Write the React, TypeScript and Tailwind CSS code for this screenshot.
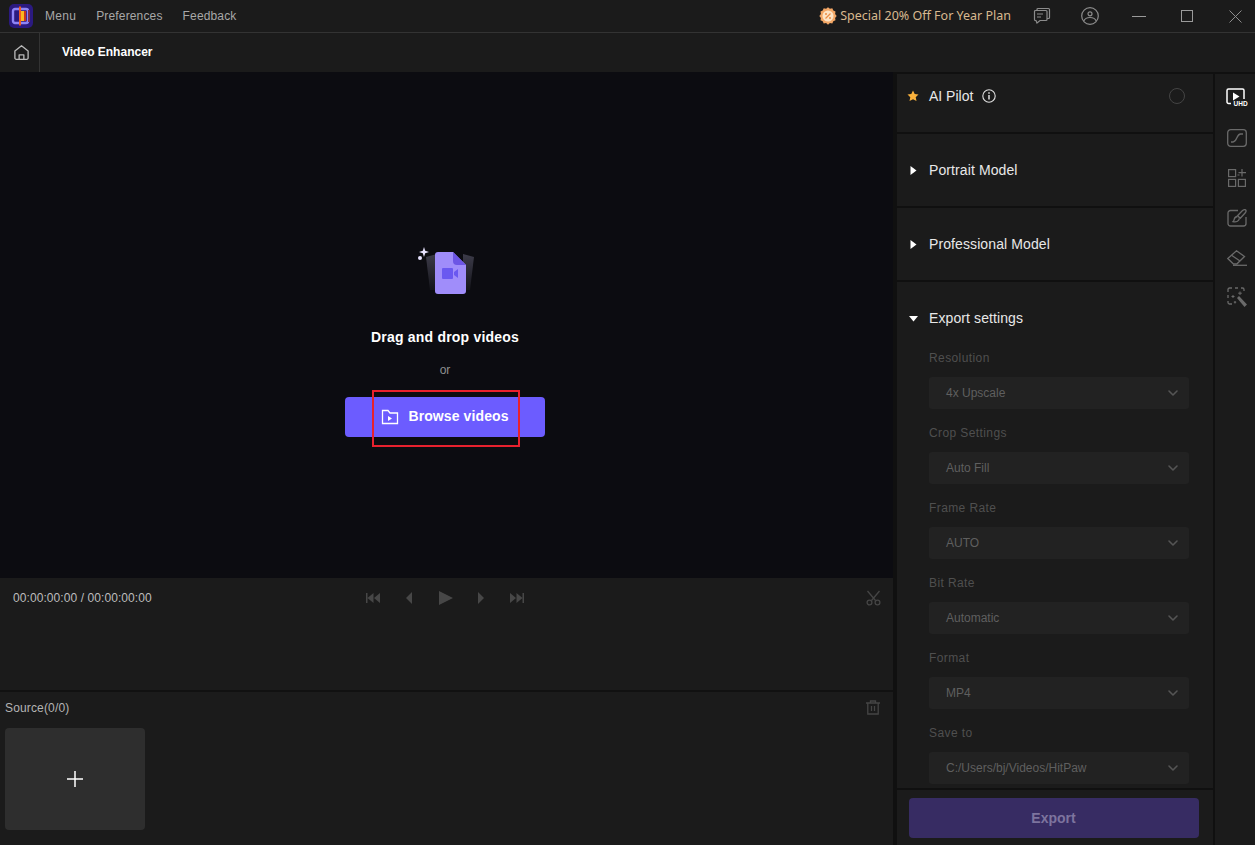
import { ChevronDown } from "lucide-react"

const sans = "font-['Liberation_Sans',Arial,sans-serif]"

const settings = [
  { label: "Resolution", value: "4x Upscale" },
  { label: "Crop Settings", value: "Auto Fill" },
  { label: "Frame Rate", value: "AUTO" },
  { label: "Bit Rate", value: "Automatic" },
  { label: "Format", value: "MP4" },
  { label: "Save to", value: "C:/Users/bj/Videos/HitPaw" },
]

function Logo() {
  return (
    <svg width="24" height="24" viewBox="0 0 24 24">
      <rect width="24" height="24" rx="5" fill="#2b1a80" />
      <rect x="4" y="5" width="15" height="14" rx="2" fill="none" stroke="#8f84f5" strokeWidth="2.400" />
      <rect x="10" y="7" width="7" height="10" fill="#c8341f" />
      <rect x="12" y="7" width="3" height="10" fill="#f9b81f" />
      <rect x="19" y="6" width="2" height="12" fill="#7c2c52" />
      <rect x="10" y="2.500" width="2" height="19" fill="#f15a22" />
    </svg>
  )
}

function HomeIcon() {
  return (
    <svg width="17" height="17" viewBox="0 0 18 18" fill="none" stroke="#b8b8b8" strokeWidth="1.400" strokeLinejoin="round">
      <path d="M2 7.500 9 1.800l7 5.700v7.200a1.500 1.500 0 0 1-1.500 1.500h-11A1.500 1.500 0 0 1 2 14.700z" />
      <path d="M6.500 16v-4.500h5V16" />
    </svg>
  )
}

function PromoBadge() {
  return (
    <svg width="18" height="18" viewBox="0 0 18 18">
      <path
        d="M9 .3l1.900 1.500 2.400-.5 1 2.200 2.200 1-.4 2.400L17.700 9l-1.600 2 .4 2.300-2.200 1-1 2.200-2.400-.5L9 17.700 7.100 16l-2.400.5-1-2.200-2.200-1 .4-2.300L.3 9l1.600-2.100-.4-2.400 2.200-1 1-2.200 2.400.5z"
        fill="#f3a766"
      />
      <circle cx="9" cy="9" r="5.500" fill="#fde3c4" />
      <path d="M6.500 11.500l5-5" stroke="#e98b45" strokeWidth="1.200" />
      <circle cx="7" cy="7" r="1" fill="#e98b45" />
      <circle cx="11" cy="11" r="1" fill="#e98b45" />
    </svg>
  )
}

function TitleBar() {
  return (
    <header className="flex h-[33px] items-center border-b border-[#333333] bg-[#1b1b1b] text-[12px] tracking-[0.15px] text-[#a8a8a8]">
      <div className="ml-[9px] mr-[12px] flex">
        <Logo />
      </div>
      <nav className="flex gap-[20px]">
        <span className="tracking-[0.3px]">Menu</span>
        <span>Preferences</span>
        <span>Feedback</span>
      </nav>
      <div className="ml-auto flex items-center gap-[3px] font-['Noto_Sans',sans-serif] text-[12.500px] tracking-normal text-[#d8b98f]">
        <PromoBadge />
        <span>Special 20% Off For Year Plan</span>
      </div>
      <svg className="ml-[22px]" width="18" height="18" viewBox="0 0 18 18" fill="none" stroke="#8c8c8c" strokeWidth="1.200">
        <path d="M4 3.500V2.500a1 1 0 0 1 1-1h10.500a1 1 0 0 1 1 1v8a1 1 0 0 1-1 1H14" />
        <path d="M2.500 3.500h10.500a1 1 0 0 1 1 1v8a1 1 0 0 1-1 1H7l-3 2.500-1-2.500h-.5a1 1 0 0 1-1-1v-8a1 1 0 0 1 1-1z" />
        <path d="M4 7h6M4 10h4" />
      </svg>
      <svg className="ml-[30px]" width="18" height="18" viewBox="0 0 18 18" fill="none" stroke="#8c8c8c" strokeWidth="1.200">
        <circle cx="9" cy="9" r="8.300" />
        <circle cx="9" cy="6.800" r="2" />
        <path d="M2.800 14c1-2.500 3-3.500 6.200-3.500s5.200 1 6.200 3.500" />
      </svg>
      <div className="ml-[33px] h-px w-[14px] bg-[#9a9a9a]" />
      <div className="ml-[35px] size-[12px] border border-[#9a9a9a]" />
      <svg className="ml-[36px] mr-[13px]" width="13" height="13" viewBox="0 0 13 13" stroke="#8c8c8c" strokeWidth="1">
        <path d="M.5.500l12 12M12.500.500l-12 12" />
      </svg>
    </header>
  )
}

function TabBar() {
  return (
    <div className="flex h-[39px] items-center bg-[#1b1b1b]">
      <div className="flex h-full w-[40px] items-center justify-center border-r border-[#333333] pl-[3px]">
        <HomeIcon />
      </div>
      <span className="mb-[2px] ml-[22px] text-[12px] font-bold text-white">Video Enhancer</span>
    </div>
  )
}

function DropArt() {
  return (
    <svg width="60" height="50" viewBox="0 0 60 50">
      <defs>
        <linearGradient id="card" x1="0" y1="0" x2="0" y2="1">
          <stop offset="0" stopColor="#3c3b49" />
          <stop offset="1" stopColor="#16161c" />
        </linearGradient>
      </defs>
      <path d="M11 10l11-3v36h-7z" fill="url(#card)" />
      <path d="M59 10l-11-3v36h7z" fill="url(#card)" />
      <path d="M23 5h15l13 13v26a3 3 0 0 1-3 3H23a3 3 0 0 1-3-3V8a3 3 0 0 1 3-3z" fill="#a08dfa" />
      <path d="M38 5l13 13h-9a4 4 0 0 1-4-4z" fill="#6c55e5" />
      <rect x="27" y="21" width="11" height="11" rx="1" fill="#6a58f0" />
      <path d="M39 25l4-3v9l-4-3z" fill="#6a58f0" />
      <path d="M9 0l1.200 3.800 3.800 1.200-3.800 1.200L9 10 7.800 6.200 4 5l3.800-1.200z" fill="#e8e3ff" />
      <circle cx="5" cy="11" r="2" fill="#e8e3ff" />
    </svg>
  )
}

function Preview() {
  return (
    <div className="relative flex h-[506px] flex-col items-center bg-[#0c0c11] pr-[3px]">
      <div className="mt-[175px] flex w-[200px] flex-col items-center">
        <DropArt />
        <p className="mt-[30px] text-[14px] font-bold leading-[20px] tracking-[0.2px] text-white">Drag and drop videos</p>
        <p className="mt-[16px] text-[12px] leading-[14px] text-[#8f8f8f]">or</p>
        <button className="mt-[20px] flex h-[40px] w-[200px] items-center justify-center gap-[9px] rounded-[4px] bg-[#6c5cff] pb-px text-[14px] font-bold tracking-[0.1px] text-white">
          <svg width="18" height="18" viewBox="0 0 18 18" fill="none" stroke="#ffffff" strokeWidth="1.300">
            <path d="M1.500 15.500V2.500h5.500l2 2.500h7.500v10.500z" />
            <path d="M7 8v5l4-2.500z" fill="#ffffff" stroke="none" />
          </svg>
          Browse videos
        </button>
      </div>
      {/* red annotation from the original screenshot */}
      <div className="absolute left-[372px] top-[318px] h-[57px] w-[148px] border-2 border-[#e8212e]" />
    </div>
  )
}

function Transport() {
  return (
    <div className="relative h-[112px] bg-[#1b1b1b]">
      <div className="flex h-[40px] items-center px-[13px] text-[12px] tracking-[0.08px] text-[#bdbdbd]">
        <span>00:00:00:00 / 00:00:00:00</span>
      </div>
      <svg className="absolute left-[366px] top-[12px]" width="160" height="16" viewBox="0 0 160 16" fill="#474747">
        <path d="M0 3h1.500v10H0zM1.500 8l6-5v10zM8 8l6-5v10z" />
        <path d="M40 8l6-6v12z" />
        <path d="M73 1l14 7-14 7z" />
        <path d="M112 2l6 6-6 6z" />
        <path d="M156.500 3h1.500v10h-1.500zM150.500 3l6 5-6 5zM144 3l6 5-6 5z" />
      </svg>
      <svg className="absolute left-[866px] top-[12px]" width="15" height="16" viewBox="0 0 15 16" fill="none" stroke="#454545" strokeWidth="1.300">
        <circle cx="3.500" cy="12.500" r="2.400" />
        <circle cx="11.500" cy="12.500" r="2.400" />
        <path d="M1.500 1l8 9.500M13.500 1l-8 9.500" />
      </svg>
    </div>
  )
}

function Source() {
  return (
    <div className="relative flex-1 bg-[#1b1b1b] px-[5px] pt-[9px]">
      <p className="text-[12px] leading-[15px] tracking-[0.15px] text-[#b4b4b4]">Source(0/0)</p>
      <div className="mt-[12px] flex h-[102px] w-[140px] items-center justify-center rounded-[4px] bg-[#2e2e2e]">
        <svg width="16" height="16" viewBox="0 0 16 16" stroke="#ffffff" strokeWidth="1.500">
          <path d="M8 0v16M0 8h16" />
        </svg>
      </div>
      <svg className="absolute left-[866px] top-[8px]" width="14" height="15" viewBox="0 0 14 15" fill="none" stroke="#454545" strokeWidth="1.300">
        <path d="M0 3h14M4.500 3V1h5v2M1.800 3v11h10.400V3M5.500 6v5M8.500 6v5" />
      </svg>
    </div>
  )
}

function Caret({ open }: { open?: boolean }) {
  return (
    <svg className="mr-[11px]" width="9" height="9" viewBox="0 0 9 9" fill="#ffffff">
      {open ? <path d="M0 2h9L4.500 7.500z" /> : <path d="M1.500 0 7.500 4.500 1.500 9z" />}
    </svg>
  )
}

function ModelRow({ title }: { title: string }) {
  return (
    <div className="flex h-[72px] items-center bg-[#1b1b1b] pl-[12px] text-[14px] tracking-[0.1px] text-[#e8e8e8]">
      <Caret />
      {title}
    </div>
  )
}

function SidePanel() {
  return (
    <aside className="flex w-[316px] flex-col gap-[2px]">
      <div className="flex h-[58px] items-center bg-[#1b1b1b] pb-[14px] pl-[10px] text-[14px] text-[#e8e8e8]">
        <svg width="12" height="12" viewBox="0 0 12 12" fill="#f9b13c">
          <path d="M6 .5l1.700 3.600 3.800.5-2.800 2.600.8 3.900L6 9.200l-3.500 1.900.8-3.900L.5 4.600l3.800-.5z" />
        </svg>
        <span className="ml-[10px]">AI Pilot</span>
        <svg className="ml-[9px]" width="14" height="14" viewBox="0 0 14 14" fill="none" stroke="#e0e0e0" strokeWidth="1.100">
          <circle cx="7" cy="7" r="6.200" />
          <path d="M7 6v4.500M7 3.300v1.400" strokeWidth="1.500" />
        </svg>
        <div className="ml-auto mr-[28px] size-[16px] rounded-full border border-[#444444]" />
      </div>
      <ModelRow title="Portrait Model" />
      <ModelRow title="Professional Model" />
      <div className="h-[506px] overflow-hidden bg-[#1b1b1b]">
        <div className="flex h-[68px] items-center pl-[12px] pt-[4px] text-[14px] tracking-[0.1px] text-[#e8e8e8]">
          <Caret open />
          Export settings
        </div>
        <div className="flex flex-col gap-[17px] pl-[32px] pr-[24px] pt-px">
          {settings.map((s) => (
            <div key={s.label}>
              <p className="mb-[12px] text-[12px] leading-[14px] tracking-[0.4px] text-[#4f4f4f]">{s.label}</p>
              <div className="flex h-[32px] items-center justify-between rounded-[3px] bg-[#222222] pl-[17px] pr-[8px] text-[12px] text-[#5f5f5f]">
                {s.value}
                <ChevronDown size={16} strokeWidth={2.400} color="#555555" />
              </div>
            </div>
          ))}
        </div>
      </div>
      <div className="flex flex-1 items-start bg-[#1b1b1b] pl-[12px] pr-[14px] pt-[8px]">
        <button className="flex h-[40px] w-full items-center justify-center rounded-[4px] bg-[#372c63] pr-px text-[14px] font-bold text-[#7d749e]">
          Export
        </button>
      </div>
    </aside>
  )
}

function ToolRail() {
  return (
    <aside className="flex w-[40px] flex-col items-center bg-[#1b1b1b] pl-[4px] pt-[14px]">
      <svg width="22" height="18" viewBox="0 0 22 18" fill="none">
        <path d="M5 15.500H2.500a1.500 1.500 0 0 1-1.500-1.500V2.500A1.500 1.500 0 0 1 2.500 1h14A1.500 1.500 0 0 1 18 2.500V11" stroke="#ffffff" strokeWidth="1.500" />
        <path d="M7 4.500l6.500 4L7 12.500z" fill="#ffffff" />
        <text x="7.500" y="17.500" fontSize="6.500" fontWeight="700" fill="#ffffff" fontFamily="Liberation Sans, sans-serif">UHD</text>
      </svg>
      <svg className="mt-[23px]" width="20" height="18" viewBox="0 0 20 18" fill="none" stroke="#6a6a6a" strokeWidth="1.300">
        <rect x=".7" y=".7" width="18.600" height="16.600" rx="3" />
        <path d="M4 13h2c4 0 3.500-8 7.500-8H16" />
      </svg>
      <svg className="mt-[22px]" width="18" height="18" viewBox="0 0 18 18" fill="none" stroke="#6a6a6a" strokeWidth="1.200">
        <rect x=".6" y=".6" width="7" height="7" />
        <rect x=".6" y="10.400" width="7" height="7" />
        <rect x="10.400" y="10.400" width="7" height="7" />
        <path d="M14 0v7.500M10.500 3.700h7.500M9.500 6h2" />
      </svg>
      <svg className="mt-[22px]" width="20" height="18" viewBox="0 0 20 18" fill="none" stroke="#6a6a6a" strokeWidth="1.300">
        <path d="M11 1.500H3.500a2.500 2.500 0 0 0-2.500 2.500v10.500A2.500 2.500 0 0 0 3.500 17h13a2.500 2.500 0 0 0 2.500-2.500V8" />
        <path d="M18.500 .8c.8 .8 .6 2-.2 3l-5 5.500-2.800-2.500 5-5.200c1-.8 2.200-1.500 3-.8z" />
        <path d="M10.500 7.500c-1.500 .2-3 1.200-3.300 2.800-.2 1-.6 1.800-1.200 2.400 2 .4 4.500 0 5.500-1.300.7-.9 .8-1.600 .5-2.200" />
      </svg>
      <svg className="mt-[23px]" width="20" height="16" viewBox="0 0 20 16" fill="none" stroke="#6a6a6a" strokeWidth="1.300">
        <path d="M.8 8.500 9.500 .8l8 5.700-7.700 7.500H6.500z" />
        <path d="M4.500 5.300l8.500 5.700" />
        <path d="M6 15.300h14" />
      </svg>
      <svg className="mt-[21px]" width="20" height="21" viewBox="0 0 20 21" fill="none" stroke="#6a6a6a" strokeWidth="1.300">
        <path d="M1 5V2.500A1.500 1.500 0 0 1 2.500 1H5M8 1h3M14 1h1.500A1.500 1.500 0 0 1 17 2.500V4M1 8v3M1 14v1.500A1.500 1.500 0 0 0 2.500 17H5" />
        <path d="M10 11l2-2 8 8.500-2.500 2.500z" fill="#6a6a6a" stroke="none" />
        <path d="M13 4.500v3.500M11.200 6.200h3.600M6 8v3M4.500 9.500h3M8 14v2.500M6.800 15.200h2.400" strokeWidth="1" />
      </svg>
    </aside>
  )
}

export default function App() {
  return (
    <div className={`flex h-[845px] w-[1255px] flex-col overflow-hidden bg-[#101010] ${sans}`}>
      <TitleBar />
      <TabBar />
      <div className="flex min-h-0 flex-1">
        <main className="flex w-[893px] flex-col">
          <Preview />
          <Transport />
          <div className="h-[2px] bg-[#111111]" />
          <Source />
        </main>
        <div className="flex flex-1 gap-[2px] pl-[4px] pt-[2px]">
          <SidePanel />
          <ToolRail />
        </div>
      </div>
    </div>
  )
}
